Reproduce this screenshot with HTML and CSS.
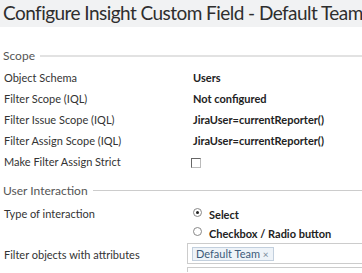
FILE: index.html
```html
<!DOCTYPE html>
<html>
<head>
<meta charset="utf-8">
<link rel="stylesheet" href="styles.css">
</head>
<body>
<header class="title">Configure Insight Custom Field - Default Team</header>
<section class="group scope">
  <div class="legend"><span>Scope</span><i class="rule"></i></div>
  <div class="row"><div class="label">Object Schema</div><div class="value">Users</div></div>
  <div class="row"><div class="label">Filter Scope (IQL)</div><div class="value">Not configured</div></div>
  <div class="row"><div class="label">Filter Issue Scope (IQL)</div><div class="value">JiraUser=currentReporter()</div></div>
  <div class="row"><div class="label">Filter Assign Scope (IQL)</div><div class="value">JiraUser=currentReporter()</div></div>
  <div class="row"><div class="label">Make Filter Assign Strict</div><div class="value"><span class="checkbox"></span></div></div>
</section>
<section class="group interaction">
  <div class="legend"><span>User Interaction</span><i class="rule"></i></div>
  <div class="row tall"><div class="label">Type of interaction</div>
    <div class="value radios">
      <div class="radio-line"><span class="radio checked"></span>Select</div>
      <div class="radio-line"><span class="radio"></span>Checkbox / Radio button</div>
    </div>
  </div>
  <div class="row attr"><div class="label">Filter objects with attributes</div>
    <div class="value"><div class="picker"><span class="tag">Default Team <b class="x">×</b></span></div><div class="picker next"></div></div>
  </div>
</section>
</body>
</html>
```
FILE: styles.css
```css
html, body { margin: 0; padding: 0; background: #fff; }
body {
  font-family: "Lato", "Open Sans", sans-serif;
  color: #333;
  width: 362px;
  height: 273px;
  overflow: hidden;
}
.title {
  background: #f1f2f3;
  height: 27px;
  box-sizing: border-box;
  padding: 1px 0 0 3px;
  font-size: 19px;
  line-height: 24px;
  letter-spacing: -0.55px;
  color: #2e2e2e;
  white-space: nowrap;
}
.scope { margin-top: 20px; }
.legend {
  display: flex;
  align-items: center;
  gap: 5px;
  height: 16px;
  padding-left: 3px;
  font-size: 12px;
  color: #555;
}
.rule { flex: 1; height: 2px; background: #e2e2e2; margin-top: 1px; }
.interaction .rule { height: 1px; background: #ccc; }
.row {
  display: grid;
  grid-template-columns: 187px 1fr;
  align-items: center;
  height: 21px;
  font-size: 11px;
}
.scope .legend { margin-bottom: 4px; }
.label { padding-left: 4px; color: #333; white-space: nowrap; }
.value { padding-left: 6px; font-weight: 700; color: #222; white-space: nowrap; }
.checkbox {
  display: inline-block;
  width: 8px; height: 8px;
  border: 1px solid #666;
  border-right-color: #bbb; border-bottom-color: #bbb;
  vertical-align: middle;
  margin-left: -2px;
}
.interaction { margin-top: 10px; }
.interaction .legend { margin-bottom: 7px; }
.row.tall { height: auto; align-items: start; }
.row.tall .label { padding-top: 2px; }
.radios { display: flex; flex-direction: column; }
.radio-line { display: flex; align-items: center; height: 19px; gap: 7px; }
.radio {
  width: 7px; height: 7px; border-radius: 50%;
  border: 1px solid #888;
  box-sizing: content-box;
  position: relative;
  margin-top: -5px;
}
.radio.checked::after {
  content: ""; position: absolute; left: 2px; top: 2px;
  width: 3px; height: 3px; border-radius: 50%; background: #222;
}
.row.attr { height: auto; align-items: start; margin-top: 0; }
.row.attr .label { padding-top: 5px; }
.row.attr .value { padding-left: 0; font-weight: 400; }
.picker {
  height: 21px; box-sizing: border-box;
  border: 1px solid #ccc; border-right: none;
  padding: 3px 0 0 4px;
}
.picker.next { margin-top: 3px; height: 5px; border-bottom: none; }
.tag {
  display: inline-block;
  background: #eef3f8;
  border: 1px solid #c2cfdd;
  color: #3d5b7a;
  font-size: 11px;
  line-height: 12px;
  padding: 0 4px 0 3px;
}
.x { font-weight: 400; color: #7a8a9a; font-size: 10px; }
```
